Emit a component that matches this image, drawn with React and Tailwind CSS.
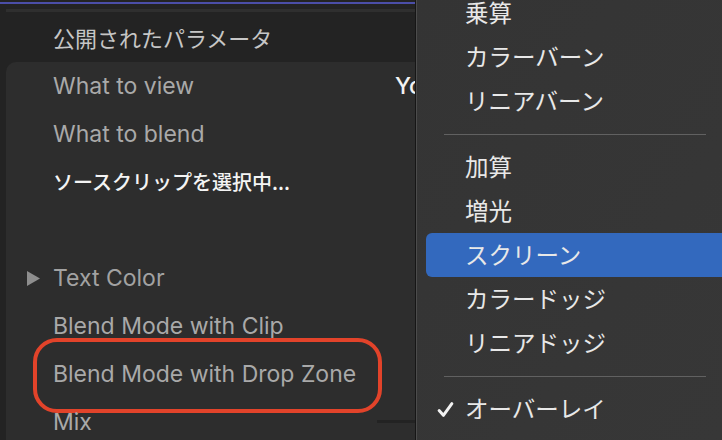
import React from 'react';

const latin = "font-['Inter','Noto_Sans_CJK_JP',sans-serif]";

const menuItems = [
  { label: '乗算' },
  { label: 'カラーバーン' },
  { label: 'リニアバーン' },
  { sep: true },
  { label: '加算' },
  { label: '増光' },
  { label: 'スクリーン', active: true },
  { label: 'カラードッジ' },
  { label: 'リニアドッジ' },
  { sep: true },
  { label: 'オーバーレイ', checked: true },
];

const Check = () => (
  <svg width="17" height="17" viewBox="0 0 16 16" fill="none">
    <path d="M2 9 L6 13.5 L14 2.5" stroke="#f2f2f2" strokeWidth="2.8" strokeLinecap="round" strokeLinejoin="round" />
  </svg>
);

const Row = ({ children, pad = 'pl-[47px]' }) => (
  <div className={`relative h-[48px] flex items-center shrink-0 ${pad}`}>
    {children}
  </div>
);

const BlendMenu = () => (
  <div className="flex-1 h-full border-l border-[#161616] overflow-hidden">
    <div className="h-full border-l border-[#4c4c4c] bg-gradient-to-br from-[#343434] to-[#373737] flex flex-col">
      <div className="-mt-[9px] flex flex-col">
        {menuItems.map((item, i) =>
          item.sep ? (
            <div key={i} className="h-[22px] flex items-center shrink-0">
              <div className="ml-[27px] w-[262px] h-px bg-[#616161]" />
            </div>
          ) : (
            <div
              key={i}
              className={`ml-[9px] mr-[-10px] h-[44px] rounded-[6px] flex items-center shrink-0 ${
                item.active ? 'bg-[#3369be]' : ''
              }`}
            >
              <div className="w-[39px] pl-[11px] flex items-center">
                {item.checked && <Check />}
              </div>
              <span className="text-[23.5px] text-[#e8e8e8] font-['Noto_Sans_CJK_JP',sans-serif] leading-none">
                {item.label}
              </span>
            </div>
          )
        )}
      </div>
    </div>
  </div>
);

const App = () => {
  return (
    <div className={`w-[722px] h-[440px] overflow-hidden bg-[#232323] flex ${latin}`}>
      <div className="w-[415px] h-full flex flex-col overflow-hidden shrink-0">
        <div className="h-[2px] shrink-0" />
        <div className="h-[2px] bg-[#4b4ea8] shrink-0" />
        <div className="h-[5px] shrink-0" />
        <div className="ml-[6px] h-[3px] bg-[#2f2f2f] shrink-0" />
        <div className="h-[50px] flex items-center pl-[53px] shrink-0">
          <span className="text-[22px] text-[#c6c6c6] font-['Noto_Sans_CJK_JP',sans-serif] leading-none">
            公開されたパラメータ
          </span>
        </div>
        <div className="ml-[6px] flex-1 bg-[#2d2d2d] rounded-tl-[10px] flex flex-col">
          <Row>
            <span className="w-[342px] text-[23px] text-[#a9a9a9] shrink-0">What to view</span>
            <span className="w-[20px] overflow-hidden text-[23px] text-[#f2f2f2] font-medium whitespace-nowrap">
              Your Clip
            </span>
          </Row>
          <Row>
            <span className="text-[23px] text-[#a9a9a9]">What to blend</span>
          </Row>
          <Row>
            <span className="text-[20px] text-[#f4f4f4] font-medium font-['Noto_Sans_CJK_JP',sans-serif]">
              ソースクリップを選択中...
            </span>
          </Row>
          <Row />
          <Row pad="pl-[21px]">
            <svg width="13" height="15" viewBox="0 0 13 15" className="mr-[13px] shrink-0">
              <path d="M0 0 L13 7.5 L0 15 Z" fill="#8e8e8e" />
            </svg>
            <span className="text-[23px] text-[#a2a2a2]">Text Color</span>
          </Row>
          <Row>
            <span className="text-[23px] text-[#a9a9a9]">Blend Mode with Clip</span>
          </Row>
          <Row>
            <span className="text-[23px] text-[#a9a9a9]">Blend Mode with Drop Zone</span>
            <div className="absolute left-[27px] top-[-12px] w-[349px] h-[75px] border-[4px] border-[#e2432a] rounded-[24px]" />
          </Row>
          <Row>
            <span className="text-[23px] text-[#a9a9a9]">Mix</span>
            <div className="absolute left-[371px] top-[22px] h-[3px] w-[60px] bg-[#232323]" />
          </Row>
        </div>
      </div>
      <BlendMenu />
    </div>
  );
};

export default App;
